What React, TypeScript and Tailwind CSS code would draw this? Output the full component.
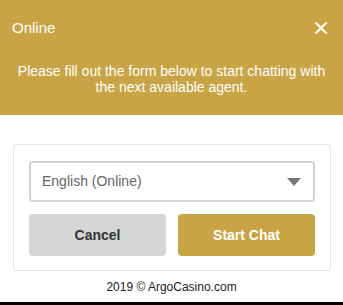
import React, { useState } from 'react';

const App: React.FC = () => {
  const [language, setLanguage] = useState('en');

  return (
    <div className="w-[343px] h-[305px] bg-white flex flex-col font-['Liberation_Sans',Arial,sans-serif]">
      {/* Header */}
      <div className="bg-[#c8a445] text-white h-[115px] px-3 pt-[19px]">
        <div className="flex items-center justify-between h-[18px]">
          <span className="text-[15px] leading-[18px]">Online</span>
          <button className="mr-[4px] p-0" aria-label="Close">
            <svg width="12" height="12" viewBox="0 0 12 12">
              <path d="M1 1L11 11M11 1L1 11" stroke="white" strokeWidth="2" strokeLinecap="square" />
            </svg>
          </button>
        </div>
        <p className="mt-[26px] text-[14px] leading-[16px] text-center">
          Please fill out the form below to start chatting with the next available agent.
        </p>
      </div>

      {/* Form card */}
      <div className="mt-[29px] ml-[13px] w-[318px] border border-[#e6e6e6] rounded-[2px] px-[15px] pt-[16px] pb-[14px]">
        <div className="relative h-[41px]">
          <select
            value={language}
            onChange={(e) => setLanguage(e.target.value)}
            className="appearance-none w-full h-full border-2 border-[#d4d4d4] rounded-[4px] pl-[11px] text-[14px] text-[#666] bg-white outline-none"
          >
            <option value="en">English (Online)</option>
          </select>
          <svg className="absolute right-[14px] top-[17px] pointer-events-none" width="14" height="8" viewBox="0 0 14 8">
            <path d="M0 0H14L7 8Z" fill="#777" />
          </svg>
        </div>
        <div className="mt-[12px] flex gap-[12px]">
          <button className="flex-1 h-[42px] rounded-[4px] bg-[#d6d6d6] text-[#333] text-[14px] font-bold">
            Cancel
          </button>
          <button className="flex-1 h-[42px] rounded-[4px] bg-[#c8a445] text-white text-[14px] font-bold">
            Start Chat
          </button>
        </div>
      </div>

      {/* Footer */}
      <div className="flex-1 flex items-center justify-center text-[12px] text-[#222]">
        2019 © ArgoCasino.com
      </div>
      <div className="h-[3px] bg-black" />
    </div>
  );
};

export default App;
